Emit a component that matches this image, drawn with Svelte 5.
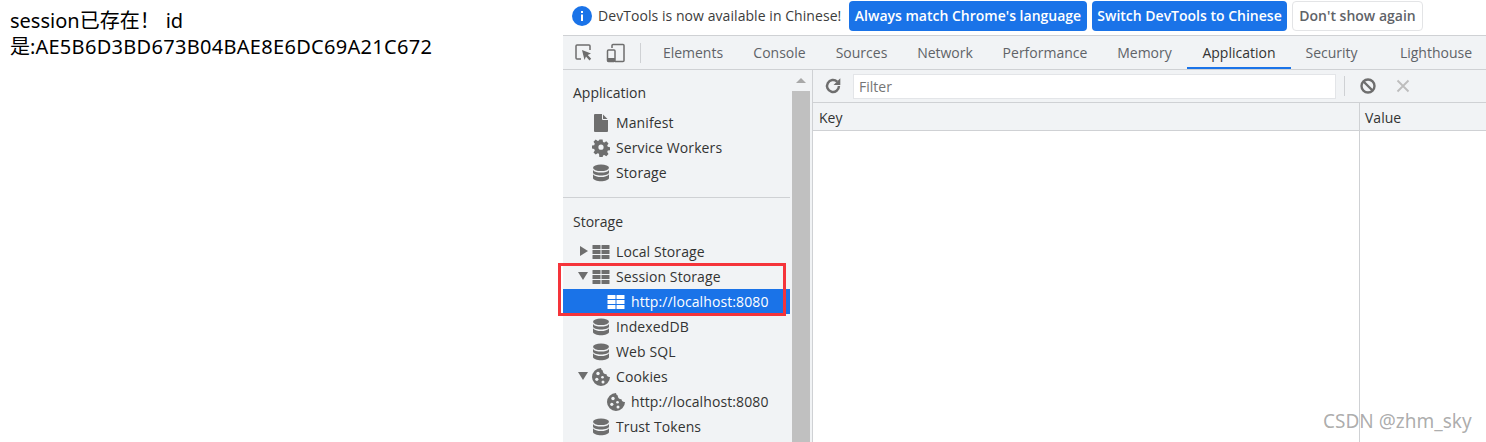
<script>
  const tabs = [
    { label: 'Elements', w: 90 },
    { label: 'Console', w: 83 },
    { label: 'Sources', w: 81 },
    { label: 'Network', w: 86 },
    { label: 'Performance', w: 114 },
    { label: 'Memory', w: 85 },
    { label: 'Application', w: 104, active: true },
    { label: 'Security', w: 81 },
    { label: 'Lighthouse', w: 128 }
  ];
  const appRows = [
    { icon: 'file', label: 'Manifest' },
    { icon: 'gear', label: 'Service Workers' },
    { icon: 'db', label: 'Storage' }
  ];
  const storeRows = [
    { icon: 'grid', label: 'Local Storage', arrow: 'right' },
    { icon: 'grid', label: 'Session Storage', arrow: 'down' },
    { icon: 'grid', label: 'http://localhost:8080', child: true, selected: true },
    { icon: 'db', label: 'IndexedDB' },
    { icon: 'db', label: 'Web SQL' },
    { icon: 'cookie', label: 'Cookies', arrow: 'down' },
    { icon: 'cookie', label: 'http://localhost:8080', child: true },
    { icon: 'db', label: 'Trust Tokens' }
  ];
</script>

{#snippet icon(name)}
  <svg class="ico" viewBox="0 0 18 18" width="18" height="18" aria-hidden="true">
    {#if name === 'file'}
      <path d="M3 0h7.500L16 5.500V17a1 1 0 0 1-1 1H3a1 1 0 0 1-1-1V1a1 1 0 0 1 1-1z" fill="currentColor" />
      <path d="M10.500 0v5.500H16" fill="none" stroke="#f1f3f5" stroke-width="1" />
    {:else if name === 'gear'}
      <path fill-rule="evenodd" fill="currentColor" d="M7.400 1h3.200l.4 2.300 1.300.6 2-1.300 2.200 2.200-1.300 2 .6 1.400 2.200.4v3l-2.200.4-.6 1.400 1.300 2-2.200 2.200-2-1.300-1.300.5-.4 2.200H7.400L7 15.200l-1.300-.5-2 1.300-2.200-2.200 1.300-2-.6-1.400L0 10V7l2.200-.4.6-1.400-1.300-2 2.200-2.200 2 1.300L7 1.800zM9 6a2.600 2.600 0 1 0 0 5.200A2.600 2.600 0 0 0 9 6z" transform="translate(0 -.4)" />
    {:else if name === 'db'}
      <g fill="currentColor">
        <ellipse cx="9" cy="3.800" rx="8" ry="3.300" />
        <path d="M1 5.900C2 7.800 5.500 8.600 9 8.600s7-.8 8-2.700v2.600C17 10.300 13 11.600 9 11.600S1 10.300 1 8.500z" />
        <path d="M1 10.200C2 12.100 5.500 13 9 13s7-.9 8-2.800v3.900C17 16 13 17.300 9 17.300S1 16 1 14.100z" />
      </g>
    {:else if name === 'grid'}
      <g fill="currentColor">
        <rect x="0.500" y="2" width="8" height="4" rx=".5" />
        <rect x="9.500" y="2" width="8" height="4" rx=".5" />
        <rect x="0.500" y="7" width="8" height="4" />
        <rect x="9.500" y="7" width="8" height="4" />
        <rect x="0.500" y="12" width="8" height="4" rx=".5" />
        <rect x="9.500" y="12" width="8" height="4" rx=".5" />
      </g>
    {:else if name === 'cookie'}
      <path fill="currentColor" d="M9 0a9 9 0 1 0 9 9 3.200 3.200 0 0 1-3.500-2.700A3.800 3.800 0 0 1 10.700 2.600 2.600 2.600 0 0 1 9 0z" />
      <g fill="#f1f3f5">
        <circle cx="6" cy="5.500" r="1.700" />
        <circle cx="4.800" cy="11.300" r="1.600" />
        <circle cx="10.500" cy="9.300" r="1.300" />
        <circle cx="11" cy="14" r="1.500" />
      </g>
    {/if}
  </svg>
{/snippet}

{#snippet row(r)}
  <div class="row" class:child={r.child} class:selected={r.selected}>
    {#if r.arrow}<span class="arrow {r.arrow}"></span>{/if}
    {@render icon(r.icon)}
    <span>{r.label}</span>
  </div>
{/snippet}

<div class="page">
  <div class="left">
    <p>session已存在！<span class="idl">id</span><br />是:<span class="sid">AE5B6D3BD673B04BAE8E6DC69A21C672</span></p>
  </div>

  <div class="devtools">
    <div class="infobar">
      <svg class="info" viewBox="0 0 20 20" width="20" height="20" aria-hidden="true">
        <circle cx="10" cy="10" r="10" fill="#1a73e8" />
        <rect x="9" y="8.500" width="2" height="6.500" fill="#fff" />
        <rect x="9" y="5" width="2" height="2" fill="#fff" />
      </svg>
      <span class="msg">DevTools is now available in Chinese!</span>
      <button class="primary b1">Always match Chrome's language</button>
      <button class="primary b2">Switch DevTools to Chinese</button>
      <button class="plain">Don't show again</button>
    </div>

    <div class="tabbar">
      <svg class="inspect" viewBox="0 0 20 20" width="20" height="20" aria-hidden="true">
        <path d="M7 16H3a1 1 0 0 1-1-1V3a1 1 0 0 1 1-1h12a1 1 0 0 1 1 1v4" fill="none" stroke="#6e6e6e" stroke-width="1.500" />
        <path d="M8 7l9 3.500-3.300 1.500 3.500 3.800-1.700 1.600-3.500-3.800L10.500 17z" fill="#6e6e6e" />
      </svg>
      <svg class="device" viewBox="0 0 20 20" width="20" height="20" aria-hidden="true">
        <path d="M6 5V2.500a1 1 0 0 1 1-1h10a1 1 0 0 1 1 1v15a1 1 0 0 1-1 1H9" fill="none" stroke="#6e6e6e" stroke-width="1.500" />
        <rect x="1.500" y="7" width="7.500" height="11.500" rx="1" fill="none" stroke="#6e6e6e" stroke-width="1.500" />
        <rect x="1.500" y="15" width="7.500" height="3.500" fill="#6e6e6e" />
      </svg>
      <span class="tsep"></span>
      <div class="tabs">
        {#each tabs as t}
          <span class="tab" class:active={t.active} style="width:{t.w}px">{t.label}</span>
        {/each}
      </div>
    </div>

    <div class="body">
      <aside class="side">
        <div class="tree">
          <div class="heading first">Application</div>
          {#each appRows as r}{@render row(r)}{/each}
          <div class="divider"></div>
          <div class="heading second">Storage</div>
          {#each storeRows as r}{@render row(r)}{/each}
        </div>
        <div class="scrollbar">
          <span class="up"></span>
          <span class="thumb"></span>
        </div>
      </aside>

      <main class="main">
        <div class="toolbar">
          <svg class="reload" viewBox="0 0 16 16" width="18" height="18" aria-hidden="true">
            <path d="M13.300 8a5.300 5.300 0 1 1-1.600-3.800" fill="none" stroke="#6e6e6e" stroke-width="2.200" />
            <path d="M14.500 1v6h-6z" fill="#6e6e6e" />
          </svg>
          <div class="filter">Filter</div>
          <span class="vsep"></span>
          <svg class="block" viewBox="0 0 18 18" width="18" height="18" aria-hidden="true">
            <circle cx="9" cy="9" r="6.500" fill="none" stroke="#6e6e6e" stroke-width="2.400" />
            <path d="M4.500 4.500l9 9" stroke="#6e6e6e" stroke-width="2.400" />
          </svg>
          <svg class="close" viewBox="0 0 14 14" width="14" height="14" aria-hidden="true">
            <path d="M1.500 1.500l11 11M12.500 1.500l-11 11" stroke="#bdbdbd" stroke-width="1.800" />
          </svg>
        </div>
        <div class="table">
          <div class="col key"><div class="th">Key</div></div>
          <div class="col value"><div class="th">Value</div></div>
        </div>
      </main>
    </div>
  </div>

  <div class="redbox"></div>
  <div class="mark">CSDN @zhm_sky</div>
</div>

<style>
  :global(body) {
    margin: 0;
    background: #fff;
  }
  .page {
    position: relative;
    display: flex;
    width: 1486px;
    height: 442px;
    overflow: hidden;
    font-family: "Open Sans", "Noto Sans CJK SC", sans-serif;
    color: #333;
  }
  .left {
    width: 563px;
    flex: none;
    padding: 8px 0 0 10px;
    box-sizing: border-box;
  }
  .left p {
    margin: 0;
    width: 450px;
    font-size: 20px;
    line-height: 26px;
    color: #000;
    font-family: "Noto Sans", "Noto Sans CJK SC", sans-serif;
  }
  .idl {
    margin-left: 6px;
  }
  .sid {
    letter-spacing: 0.3px;
  }
  .devtools {
    flex: 1;
    display: flex;
    flex-direction: column;
    min-width: 0;
  }
  .infobar {
    height: 36px;
    flex: none;
    display: flex;
    align-items: center;
    padding: 0 0 4px 9px;
    box-sizing: border-box;
    border-bottom: 1px solid #cfd1d4;
    font-size: 14px;
  }
  .info {
    flex: none;
  }
  .msg {
    margin-left: 6px;
    color: #3c3c3c;
    font-size: 14px;
    letter-spacing: 0.06px;
    white-space: nowrap;
    width: 251px;
  }
  button {
    height: 30px;
    margin: 0 5px 0 0;
    padding: 0;
    border-radius: 4px;
    font: 600 14px "Open Sans", sans-serif;
    white-space: nowrap;
    box-sizing: border-box;
  }
  .primary {
    background: #1a73e8;
    border: 0;
    color: #fff;
  }
  .b1 {
    width: 238px;
  }
  .b2 {
    width: 195px;
  }
  .plain {
    width: 131px;
    background: #fff;
    border: 1px solid #e3e4e6;
    color: #5f6368;
  }
  .tabbar {
    height: 34px;
    flex: none;
    display: flex;
    align-items: center;
    background: #f1f3f5;
    border-bottom: 1px solid #cfd1d4;
    box-sizing: border-box;
  }
  .inspect {
    margin-left: 11px;
    flex: none;
  }
  .device {
    margin-left: 12px;
    flex: none;
  }
  .tsep {
    width: 1px;
    height: 20px;
    background: #cfd1d4;
    margin-left: 14px;
    flex: none;
  }
  .tabs {
    display: flex;
    height: 100%;
    margin-left: 7px;
    white-space: nowrap;
  }
  .tab {
    display: flex;
    align-items: center;
    justify-content: center;
    font-size: 14px;
    color: #5f6368;
    box-sizing: border-box;
    flex: none;
  }
  .tab.active {
    color: #333;
    box-shadow: inset 0 -2px 0 #1a73e8;
  }
  .body {
    flex: 1;
    display: flex;
    min-height: 0;
    background: #f1f3f5;
  }
  .side {
    width: 250px;
    flex: none;
    display: flex;
    border-right: 1px solid #cfd1d4;
    box-sizing: border-box;
  }
  .tree {
    width: 227px;
    flex: none;
    font-size: 14px;
  }
  .heading {
    padding-left: 10px;
    color: #333;
    font-size: 14px;
    height: 25px;
    line-height: 25px;
  }
  .heading.first {
    margin-top: 10px;
    margin-bottom: 5px;
  }
  .heading.second {
    margin-top: 11px;
    margin-bottom: 5px;
  }
  .divider {
    height: 1px;
    background: #cfd1d4;
    margin-top: 12px;
  }
  .row {
    position: relative;
    height: 25px;
    display: flex;
    align-items: center;
    gap: 6px;
    padding-left: 29px;
    color: #333;
    letter-spacing: 0.1px;
    white-space: nowrap;
    box-sizing: border-box;
  }
  .row.child {
    padding-left: 44px;
  }
  .row.selected {
    background: #1a73e8;
    color: #fff;
  }
  .ico {
    color: #6e6e6e;
    flex: none;
  }
  .row.selected .ico {
    color: #fff;
  }
  .arrow {
    position: absolute;
    left: 15px;
    top: 8px;
    width: 0;
    height: 0;
  }
  .arrow.right {
    border-left: 8px solid #6e6e6e;
    border-top: 5px solid transparent;
    border-bottom: 5px solid transparent;
    left: 17px;
    top: 7px;
  }
  .arrow.down {
    border-top: 8px solid #6e6e6e;
    border-left: 5px solid transparent;
    border-right: 5px solid transparent;
  }
  .scrollbar {
    width: 18px;
    margin-left: 2px;
    flex: none;
    position: relative;
    display: flex;
    flex-direction: column;
    background: #f1f3f5;
  }
  .up {
    height: 21px;
    flex: none;
    position: relative;
  }
  .up::after {
    content: "";
    position: absolute;
    left: 4px;
    top: 8px;
    border-bottom: 5px solid #a8a8a8;
    border-left: 5px solid transparent;
    border-right: 5px solid transparent;
  }
  .thumb {
    flex: 1;
    background: #c0c0c0;
  }
  .main {
    flex: 1;
    display: flex;
    flex-direction: column;
    min-width: 0;
  }
  .toolbar {
    height: 33px;
    flex: none;
    display: flex;
    align-items: center;
    border-bottom: 1px solid #cfd1d4;
    box-sizing: border-box;
  }
  .reload {
    margin-left: 11px;
    flex: none;
  }
  .filter {
    width: 483px;
    height: 25px;
    margin-left: 11px;
    line-height: 24px;
    padding-left: 5px;
    box-sizing: border-box;
    background: #fff;
    border: 1px solid #e3e5e8;
    color: #757575;
    font-size: 14px;
    flex: none;
  }
  .vsep {
    width: 1px;
    height: 20px;
    background: #cfd1d4;
    margin-left: 8px;
    flex: none;
  }
  .block {
    margin-left: 14px;
    flex: none;
  }
  .close {
    margin-left: 19px;
    flex: none;
  }
  .table {
    flex: 1;
    display: flex;
    background: #fff;
  }
  .col {
    box-sizing: border-box;
  }
  .key {
    width: 547px;
    flex: none;
    border-right: 1px solid #cfd1d4;
  }
  .value {
    flex: 1;
  }
  .th {
    height: 28px;
    line-height: 29px;
    background: #f1f3f5;
    border-bottom: 1px solid #cfd1d4;
    box-sizing: border-box;
    padding-left: 6px;
    font-size: 14px;
    color: #333;
  }
  .value .th {
    padding-left: 5px;
  }
  .redbox {
    position: absolute;
    left: 558px;
    top: 263px;
    width: 228px;
    height: 53px;
    box-sizing: border-box;
    border: 3px solid #f5343a;
    pointer-events: none;
  }
  .mark {
    position: absolute;
    left: 1323px;
    top: 408px;
    font-size: 19px;
    color: rgba(120, 120, 120, 0.62);
    font-family: "Noto Sans", sans-serif;
    white-space: nowrap;
  }
</style>
